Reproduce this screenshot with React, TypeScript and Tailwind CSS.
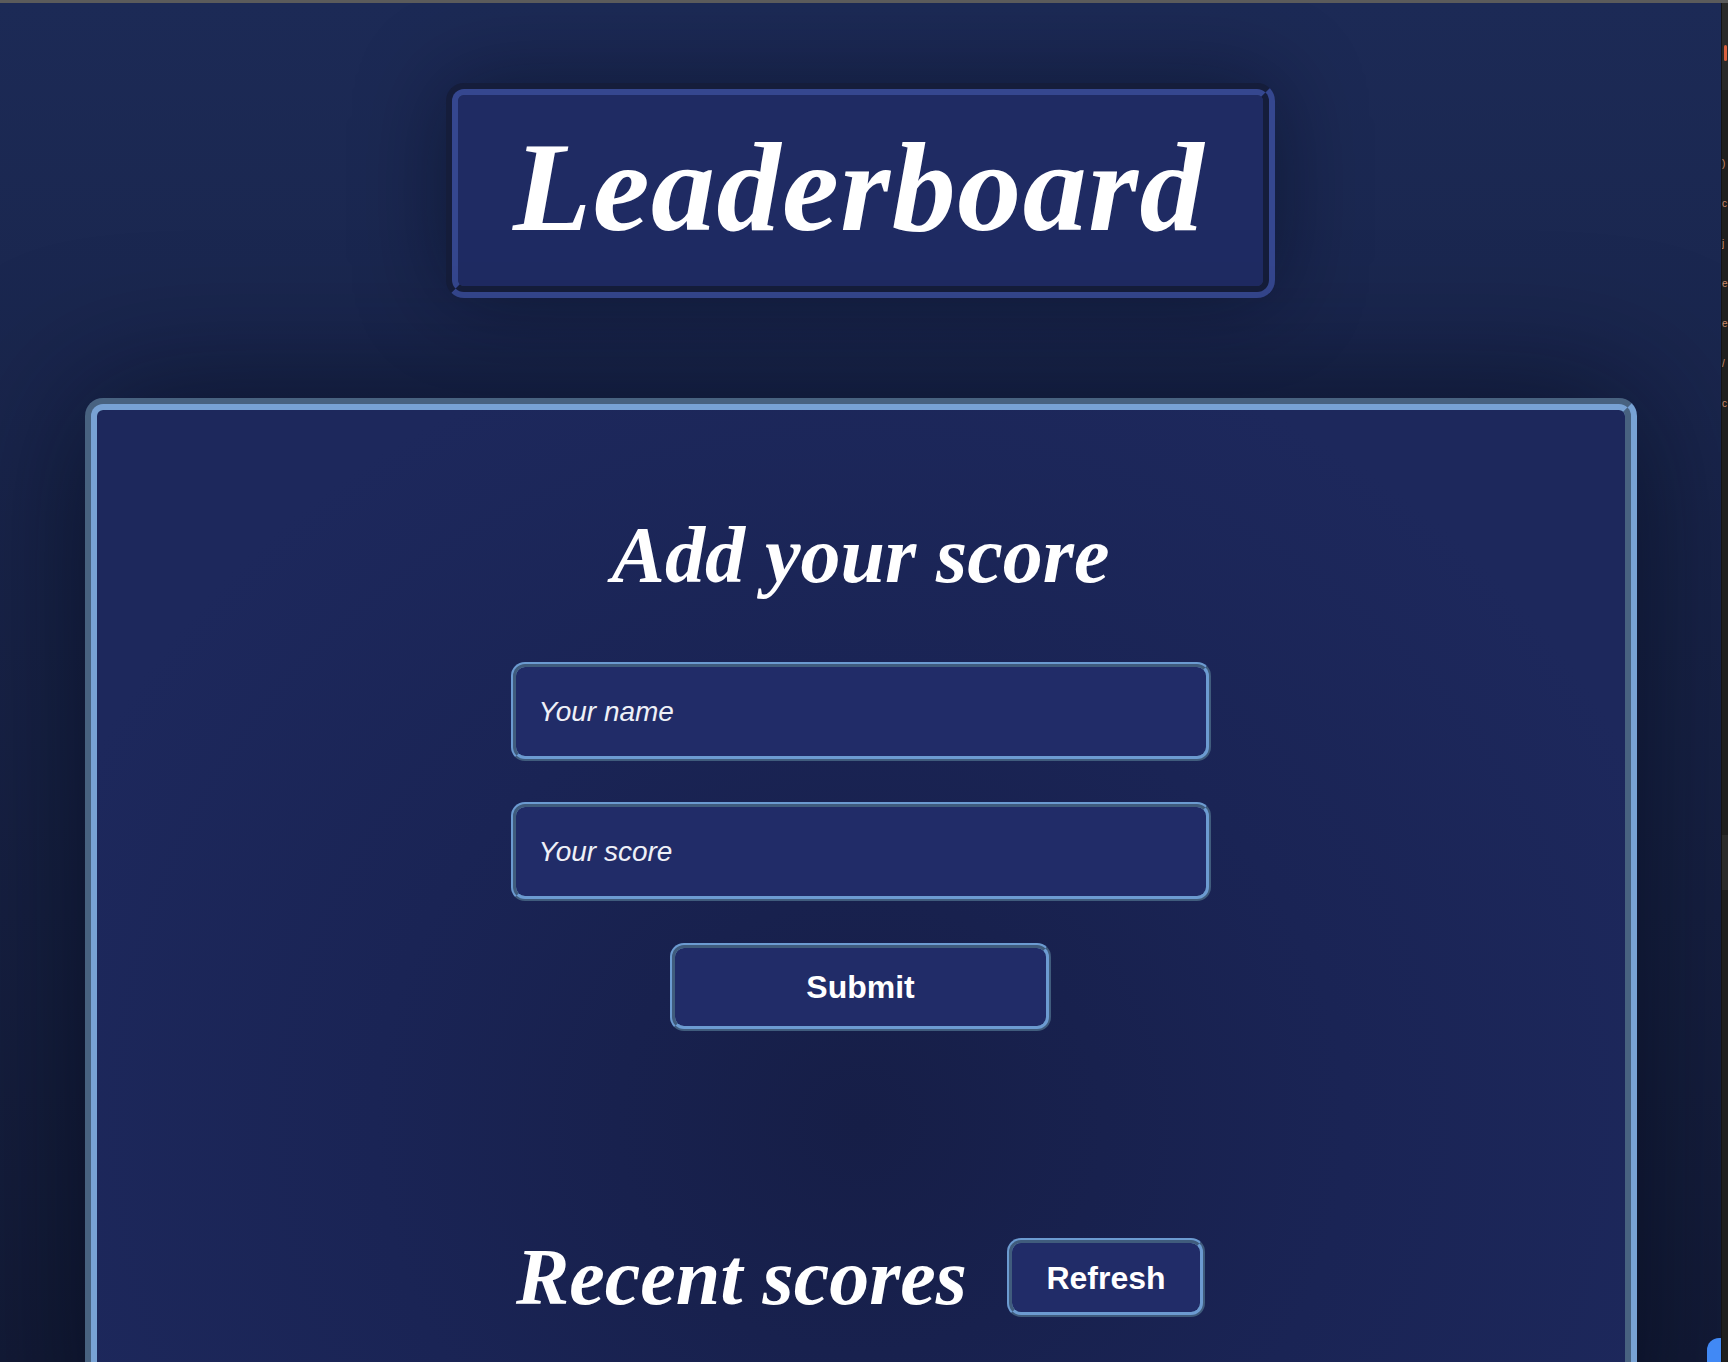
import React from "react";

const serif = "font-['Liberation_Serif','Times_New_Roman',serif]";
const sans = "font-['Liberation_Sans',Arial,sans-serif]";

const ridge =
  "rounded-[14px] border-[5px] [--tw-border-style:ridge] [border-style:ridge] border-[#6c9bd1] bg-[#212c68]";

function EditorStrip() {
  // bits of a code editor peeking in on the right
  const frags = [")", "c", "j", "e", "e", "/", "c"];
  return (
    <div className="flex w-[7px] shrink-0 flex-col overflow-hidden border-l border-[#141414] bg-[#1f1f1f]">
      <div className="flex h-[87px] shrink-0 flex-col bg-[#2a2a2a] pt-[42px] pl-[2px]">
        <div className="h-[16px] w-[3px] rounded-sm bg-[#d9603e]" />
      </div>
      <div className="flex flex-col pt-[54px] font-['Liberation_Sans',sans-serif] text-[10px] leading-[40px] text-[#c98a6d]">
        {frags.map((f, i) => (
          <span key={i}>{f}</span>
        ))}
      </div>
      <div className="mt-[411px] h-[55px] w-full bg-[#2b2b2b]" />
    </div>
  );
}

export default function App() {
  return (
    <div className="flex h-[1362px] w-[1728px] flex-col overflow-hidden bg-[#1f1f1f]">
      <div className="h-[3px] w-full shrink-0 bg-[#5b5b5b]" />
      <div className="flex min-h-0 flex-1">
        <main className="relative flex w-[1721px] shrink-0 flex-col items-center overflow-hidden bg-gradient-to-b from-[#1c2a56] to-[#131b37]">
          {/* Title */}
          <h1
            className={`mt-[80px] shrink-0 rounded-[18px] border-[12px] [--tw-border-style:groove] [border-style:groove] border-[#35478f] bg-[#1f2b63] pt-[21px] pr-[58px] pb-[28px] pl-[55px] ${serif} text-[128px] leading-[142px] font-bold tracking-[1.5px] italic text-white shadow-[0_0_90px_rgba(4,7,20,0.45)]`}
          >
            Leaderboard
          </h1>

          {/* Card */}
          <section className="mt-[100px] flex w-[1552px] shrink-0 flex-col items-center rounded-[18px] border-[12px] [--tw-border-style:groove] [border-style:groove] border-[#78a2d4] bg-[radial-gradient(ellipse_at_50%_68%,#161e47_0%,#1a2455_45%,#1d285c_80%)] pt-[101px] pb-[140px] shadow-[0_0_140px_rgba(4,7,20,0.6)]">
            <h2 className={`${serif} text-center text-[80px] leading-[89px] font-bold italic text-white`}>
              Add your score
            </h2>

            <input
              type="text"
              placeholder="Your name"
              className={`mt-[62px] h-[99px] w-[700px] ${ridge} px-[23px] ${sans} text-[28px] italic text-white outline-none placeholder:text-[#eef0f7]`}
            />
            <input
              type="text"
              placeholder="Your score"
              className={`mt-[41px] h-[99px] w-[700px] ${ridge} px-[23px] ${sans} text-[28px] italic text-white outline-none placeholder:text-[#eef0f7]`}
            />

            <button className={`mt-[42px] h-[88px] w-[381px] ${ridge} ${sans} text-[32px] font-bold text-white`}>
              Submit
            </button>

            {/* Recent scores */}
            <div className="mt-[202px] flex items-center gap-10">
              <h2 className={`${serif} text-[80px] leading-[89px] font-bold italic text-white`}>
                Recent scores
              </h2>
              <button className={`h-[79px] w-[198px] ${ridge} ${sans} text-[32px] font-bold text-white`}>
                Refresh
              </button>
            </div>
          </section>

          {/* floating button peeking at the corner */}
          <div className="absolute right-[-36px] bottom-[-26px] h-[50px] w-[50px] rounded-[12px] bg-[#4189f5]" />
        </main>
        <EditorStrip />
      </div>
    </div>
  );
}
